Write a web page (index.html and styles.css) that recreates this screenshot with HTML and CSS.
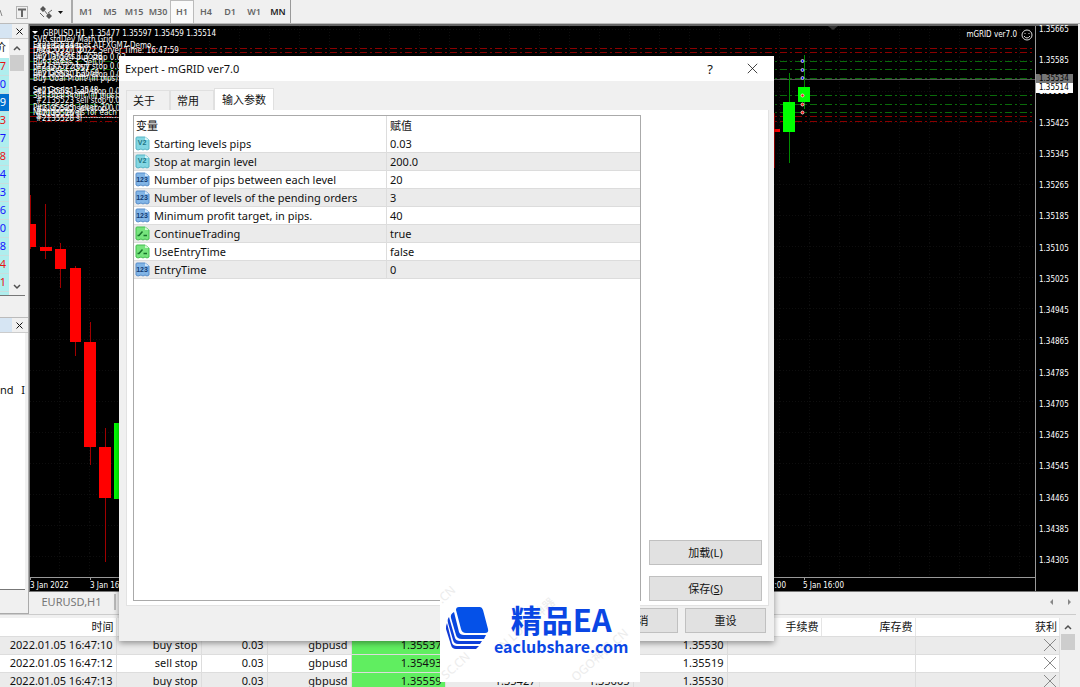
FILE: index.html
```html
<!DOCTYPE html>
<html lang="zh-CN">
<head>
    <meta charset="UTF-8">
    <title>Expert - mGRID ver7.0</title>
    <link rel="stylesheet" href="styles.css">
</head>
<body>
    <!-- shared icons -->
    <svg class="sprite">
        <symbol id="icon-half" viewBox="0 0 15 15">
            <path d="M1 2Q1 1 2 1H10L14 4V13L12 14L10 13L8 14L6 13L3 14L1 13Z" fill="#83d6e2" stroke="#56b4c4"/>
            <path d="M10 1V4H14Z" fill="#d8f5f8"/>
            <text x="7" y="9" class="half-text">V2</text>
        </symbol>
        <symbol id="icon-int" viewBox="0 0 15 15">
            <path d="M1 2Q1 1 2 1H10L14 4V13L12 14L10 13L8 14L6 13L3 14L1 13Z" fill="#82b5e6" stroke="#568dca"/>
            <path d="M10 1V4H14Z" fill="#d3e7fa"/>
            <text x="7" y="10" class="int-text">123</text>
        </symbol>
        <symbol id="icon-bool" viewBox="0 0 15 15">
            <path d="M1 2Q1 1 2 1H10L14 4V13L12 14L10 13L8 14L6 13L3 14L1 13Z" fill="#76e47d" stroke="#45bd50"/>
            <path d="M10 1V4H14Z" fill="#d2f8d4"/>
            <path d="M2.500 9.500H4L7.500 5.500M8.500 9.500H12" fill="none" stroke="#17722a" stroke-width="1.500"/>
        </symbol>
        <symbol id="icon-x" viewBox="0 0 14 14">
            <path d="M1 1L13 13M13 1L1 13" fill="none" stroke="currentColor"/>
        </symbol>
        <symbol id="icon-up" viewBox="0 0 8 8">
            <path d="M1 6L4 3L7 6" fill="none" stroke="#505050" stroke-width="1.500"/>
        </symbol>
        <symbol id="icon-down" viewBox="0 0 8 8">
            <path d="M1 2L4 5L7 2" fill="none" stroke="#505050" stroke-width="1.500"/>
        </symbol>
    </svg>

    <div class="toolbar">
        <svg class="tools" viewBox="0 0 71 24">
            <path d="M0 10L2 16" stroke="#888" fill="none"/>
            <rect x="16.500" y="6.500" width="11" height="12" fill="none" stroke="#777" stroke-dasharray="1 1"/>
            <path d="M18 9.500H26M22 9V17" stroke="#666" stroke-width="2" fill="none"/>
            <path d="M43 6L46 9L43 12L40 9ZM49 13L52 16L49 19L46 16Z" fill="#555"/>
            <path d="M40 13L44 17M44 10L48 15M48 13L52 10" stroke="#666" fill="none"/>
            <path d="M58 11H63L60.500 14Z" fill="#111"/>
        </svg>
        <div class="periods">
            <button>M1</button>
            <button>M5</button>
            <button>M15</button>
            <button>M30</button>
            <button class="active">H1</button>
            <button>H4</button>
            <button>D1</button>
            <button>W1</button>
            <button class="dark">MN</button>
        </div>
    </div>

    <div class="workspace">
        <div class="sidebar">
            <div class="market">
                <div class="side-head"><span></span><button aria-label="关闭"><svg><use href="#icon-x"/></svg></button></div>
                <div class="quotes">
                    <div class="quote-list">
                        <div class="quote-head"><span>价</span></div>
                        <div class="quote down">7</div>
                        <div class="quote">0</div>
                        <div class="quote selected">9</div>
                        <div class="quote down">3</div>
                        <div class="quote">7</div>
                        <div class="quote down">8</div>
                        <div class="quote">4</div>
                        <div class="quote">3</div>
                        <div class="quote">6</div>
                        <div class="quote">0</div>
                        <div class="quote">8</div>
                        <div class="quote down">4</div>
                        <div class="quote down">1</div>
                    </div>
                    <div class="scroll">
                        <svg><use href="#icon-up"/></svg>
                        <div class="thumb"></div>
                        <svg class="last"><use href="#icon-down"/></svg>
                    </div>
                </div>
            </div>
            <div class="navigator">
                <div class="side-head"><span></span><button aria-label="关闭"><svg><use href="#icon-x"/></svg></button></div>
                <div class="nav-list"><span>nd</span><span>I</span></div>
            </div>
        </div>

        <div class="main">
            <div class="chart">
                <svg class="plot">
                    <defs>
                        <pattern id="grid" width="30" height="31" patternUnits="userSpaceOnUse">
                            <path d="M29.500 0V31M0 3.500H30" stroke="#0e0e0e" stroke-dasharray="1 2" fill="none"/>
                        </pattern>
                    </defs>
                    <rect width="100%" height="551" fill="url(#grid)"/>
                    <!-- order levels -->
                    <g class="level stop">
                        <line x1="0" x2="100%" y1="22.500" y2="22.500"/>
                        <line x1="0" x2="100%" y1="26.500" y2="26.500"/>
                        <line x1="0" x2="100%" y1="90.500" y2="90.500"/>
                        <line x1="0" x2="100%" y1="95.500" y2="95.500"/>
                    </g>
                    <g class="level">
                        <line x1="0" x2="100%" y1="35.500" y2="35.500"/>
                        <line x1="0" x2="100%" y1="43.500" y2="43.500"/>
                        <line x1="0" x2="100%" y1="52.500" y2="52.500"/>
                        <line x1="0" x2="100%" y1="69.500" y2="69.500"/>
                        <line x1="0" x2="100%" y1="78.500" y2="78.500"/>
                        <line x1="0" x2="100%" y1="86.500" y2="86.500"/>
                    </g>
                    <line x1="0" x2="100%" y1="53.500" y2="53.500" stroke="#555"/>
                    <!-- candles -->
                    <g fill="#f00" stroke="#a00000">
                        <path d="M.5 169V223M15.500 178V233M30.500 217V262M45.500 240V330M60.500 296V439M75.500 402V536M744.500 87V142"/>
                        <path stroke="none" d="M0 198H6V221H0ZM10 221H22V225H10ZM25 223H36V243H25ZM40 242H51V316H40ZM54 316H66V421H54ZM69 421H81V472H69ZM732 103H750V106H732Z"/>
                    </g>
                    <g fill="#0f0" stroke="#008a00">
                        <path d="M759.500 47V137M774.500 29V83"/>
                        <path stroke="none" d="M84 397H96V473H84ZM753 76H765V106H753ZM768 61H780V76H768Z"/>
                    </g>
                    <g fill="#00f" stroke="#ccc">
                        <circle cx="772.500" cy="35" r="1.500"/>
                        <circle cx="772.500" cy="44" r="1.500"/>
                        <circle cx="772.500" cy="52" r="1.500"/>
                    </g>
                    <g fill="#f00" stroke="#ecc">
                        <circle cx="772.500" cy="69.500" r="1.500"/>
                        <circle cx="772.500" cy="78.500" r="1.500"/>
                        <circle cx="772.500" cy="86.500" r="1.500"/>
                    </g>
                    <path d="M798 0H808L803 4Z" fill="#333"/>
                    <!-- header, EA comment and order labels -->
                    <path d="M2 5H8L5 8Z" fill="#fff"/>
                    <g class="chart-text">
                        <text x="13" y="10">GBPUSD,H1&nbsp; 1.35477 1.35597 1.35459 1.35514</text>
                        <text x="3" y="16">SVR stdDev Math Grid</text>
                        <text x="3" y="22">Expert Trader at ATFXGM7-Demo</text>
                        <text x="6" y="22">#2135521 tp</text>
                        <text x="3" y="27">Date: 05.01.2022 Server Time: 16:47:59</text>
                        <text x="6" y="26">#2135527 tp</text>
                        <text x="3" y="33">Buy Targets 1.3558</text>
                        <text x="6" y="34">#2135524 buy stop 0.03</text>
                        <text x="3" y="39">Buy Levels 3, Sell 0</text>
                        <text x="6" y="43">#2135522 buy stop 0.03</text>
                        <text x="3" y="45">Pending 1.3557</text>
                        <text x="6" y="51">#2135520 buy stop 0.03</text>
                        <text x="3" y="50">Buy Goals: 1.3560</text>
                        <text x="3" y="55">Buy Goal Profit (in pips): 0</text>
                        <text x="3" y="67">Sell Goals: 1.3548</text>
                        <text x="6" y="68">#2135521 sell stop 0.03</text>
                        <text x="3" y="72">Sell Goal Profit (in pips): 0</text>
                        <text x="6" y="77">#2135523 sell stop 0.03</text>
                        <text x="3" y="84">Pips of each level: 20</text>
                        <text x="6" y="85">#2135525 sell stop 0.03</text>
                        <text x="3" y="89">Number levels for each</text>
                        <text x="6" y="90">#2135526 sl</text>
                        <text x="6" y="95">#2135528 sl</text>
                        <text x="6" y="94">----------------------------------</text>
                    </g>
                    <!-- time axis -->
                    <path d="M.5 551V554M60.500 551V554M774.500 551V554" stroke="#999"/>
                    <line x1="0" x2="100%" y1="551.500" y2="551.500" stroke="#999"/>
                    <g class="chart-text">
                        <text x="0" y="562">3 Jan 2022</text>
                        <text x="60" y="562">3 Jan 16:00</text>
                        <text x="715" y="562">5 Jan 12:00</text>
                        <text x="773" y="562">5 Jan 16:00</text>
                    </g>
                </svg>
                <div class="expert-name">mGRID ver7.0
                    <svg viewBox="0 0 12 12"><circle cx="6" cy="6" r="5"/><path d="M3 7Q6 11 9 7M4 4V5M8 4V5"/></svg>
                </div>
                <div class="price-axis">
                    <span>1.35665</span>
                    <span>1.35585</span>
                    <span>1.35505</span>
                    <span>1.35425</span>
                    <span>1.35345</span>
                    <span>1.35265</span>
                    <span>1.35185</span>
                    <span>1.35105</span>
                    <span>1.35025</span>
                    <span>1.34945</span>
                    <span>1.34865</span>
                    <span>1.34785</span>
                    <span>1.34705</span>
                    <span>1.34625</span>
                    <span>1.34545</span>
                    <span>1.34465</span>
                    <span>1.34385</span>
                    <span>1.34305</span>
                    <b class="ask">1.35534</b>
                    <b class="bid">1.35514</b>
                </div>
            </div>
            <div class="chart-tabs">
                <button class="chart-tab">EURUSD,H1</button>
                <svg viewBox="0 0 26 10"><path d="M5 2V8L2 5ZM20 2V8L23 5Z" fill="#888"/></svg>
            </div>
        </div>
    </div>

    <div class="terminal">
        <table class="orders">
            <colgroup>
                <col class="c-time"><col class="c-type"><col class="c-lots"><col class="c-symbol"><col class="c-price"><col class="c-price"><col class="c-price"><col class="c-price"><col class="c-price"><col class="c-price"><col>
            </colgroup>
            <thead>
                <tr><th>时间</th><th></th><th></th><th></th><th></th><th></th><th></th><th></th><th>手续费</th><th>库存费</th><th>获利</th></tr>
            </thead>
            <tbody>
                <tr><td>2022.01.05 16:47:10</td><td>buy stop</td><td>0.03</td><td>gbpusd</td><td class="green">1.35537</td><td></td><td></td><td>1.35530</td><td colspan="2"></td><td><button aria-label="删除"><svg><use href="#icon-x"/></svg></button></td></tr>
                <tr><td>2022.01.05 16:47:12</td><td>sell stop</td><td>0.03</td><td>gbpusd</td><td class="green">1.35493</td><td></td><td></td><td>1.35519</td><td colspan="2"></td><td><button aria-label="删除"><svg><use href="#icon-x"/></svg></button></td></tr>
                <tr><td>2022.01.05 16:47:13</td><td>buy stop</td><td>0.03</td><td>gbpusd</td><td class="green">1.35559</td><td>1.35427</td><td>1.35605</td><td>1.35530</td><td colspan="2"></td><td><button aria-label="删除"><svg><use href="#icon-x"/></svg></button></td></tr>
            </tbody>
        </table>
        <div class="scroll">
            <svg><use href="#icon-up"/></svg>
            <div class="thumb"></div>
        </div>
    </div>

    <!-- expert properties dialog -->
    <div class="dialog" role="dialog" aria-labelledby="dialogTitle">
        <div class="titlebar">
            <span id="dialogTitle">Expert - mGRID ver7.0</span>
            <button>?</button>
            <button aria-label="关闭"><svg><use href="#icon-x"/></svg></button>
        </div>
        <div class="tabs">
            <button>关于</button>
            <button>常用</button>
            <button class="active">输入参数</button>
        </div>
        <div class="tab-page">
            <div class="params">
                <table>
                    <thead>
                        <tr><th class="name">变量</th><th>赋值</th></tr>
                    </thead>
                    <tbody>
                        <tr><td><svg><use href="#icon-half"/></svg>Starting levels pips</td><td>0.03</td></tr>
                        <tr><td><svg><use href="#icon-half"/></svg>Stop at margin level</td><td>200.0</td></tr>
                        <tr><td><svg><use href="#icon-int"/></svg>Number of pips between each level</td><td>20</td></tr>
                        <tr><td><svg><use href="#icon-int"/></svg>Number of levels of the pending orders</td><td>3</td></tr>
                        <tr><td><svg><use href="#icon-int"/></svg>Minimum profit target, in pips.</td><td>40</td></tr>
                        <tr><td><svg><use href="#icon-bool"/></svg>ContinueTrading</td><td>true</td></tr>
                        <tr><td><svg><use href="#icon-bool"/></svg>UseEntryTime</td><td>false</td></tr>
                        <tr><td><svg><use href="#icon-int"/></svg>EntryTime</td><td>0</td></tr>
                    </tbody>
                </table>
            </div>
            <div class="side-buttons">
                <button>加载(L)</button>
                <button>保存(<u>S</u>)</button>
            </div>
        </div>
        <div class="footer">
            <button>取消</button>
            <button>重设</button>
        </div>
    </div>

    <div class="brand">
        <svg class="mark" viewBox="0 0 200 96">
            <g class="faint">
                <text transform="translate(2 18) rotate(-42)">.CN</text>
                <text transform="translate(64 64) rotate(-42)">N LOGO神器</text>
                <text transform="translate(6 94) rotate(-42)">SC.CN</text>
                <text transform="translate(136 96) rotate(-42)">OGO神器.CN</text>
            </g>
        </svg>
        <svg class="logo" viewBox="0 0 44 44">
            <path d="M13 0H34Q36 0 37 3L42 22Q43 26 39 26H20Q16 26 15 22L10 3Q10 0 13 0Z" fill="#0551e8"/>
            <path d="M8 5L13 25Q14 28 18 28H40L38 32H16Q11 32 10 28L5 11Q4 7 8 5Z" fill="#0a48df"/>
            <path d="M3 10L9 31Q10 34 14 34H36L34 37H12Q8 37 7 33L2 16Q1 12 3 10Z" fill="#0f40da"/>
            <path d="M1 16L6 36Q7 39 11 39H33L30 42H10Q6 42 5 38L0 22Q0 18 1 16Z" fill="#123bd7"/>
        </svg>
        <div class="brand-text">
            <strong>精品EA</strong>
            <span>eaclubshare.com</span>
        </div>
    </div>
</body>
</html>
```

FILE: styles.css
```css
* { box-sizing: border-box; }
body {
    margin: 0;
    height: 100vh;
    min-height: 680px;
    display: flex;
    flex-direction: column;
    position: relative;
    overflow: hidden;
    background: #f0f0f0;
    color: #111;
    font-family: "Noto Sans", "Noto Sans CJK SC", sans-serif;
    font-size: 11px;
    line-height: 16px;
}
button { font: inherit; color: inherit; background: none; border: 0; padding: 0; }
svg { display: block; flex: none; }
.sprite { position: absolute; width: 0; height: 0; }
.half-text, .int-text { font-family: "Liberation Sans", sans-serif; font-size: 7px; font-weight: bold; text-anchor: middle; }
.half-text { fill: #1b7484; }
.int-text { fill: #123c75; }

/* toolbar */
.toolbar { display: flex; height: 24px; flex: none; border-bottom: 1px solid #bbb; }
.tools { width: 71px; height: 24px; }
.periods { display: flex; padding-left: 1px; border-left: 2px solid #aaa; border-right: 1px solid #999; }
.periods button { width: 24px; font-size: 9px; font-weight: 600; color: #666; }
.periods .active { background: #fafafa; border: 1px solid #bbb; border-width: 1px 1px 0; }
.periods .dark { color: #222; }

.workspace { flex: 1; display: flex; min-height: 0; }

/* left panels */
.sidebar { width: 29px; flex: none; display: flex; flex-direction: column; border-right: 1px solid #aaa; }
.side-head { display: flex; height: 15px; align-items: stretch; border-bottom: 1px solid #ccc; }
.side-head span { width: 12px; background: #d6e5f3; }
.side-head button { width: 14px; display: flex; align-items: center; justify-content: center; }
.side-head svg { width: 7px; height: 7px; }
.side-head use { stroke-width: 2px; }
.quotes { display: flex; height: 257px; width: 25px; border-bottom: 1px solid #777; }
.quote-list { width: 9px; background: #afeeee; }
.quote-head { height: 19px; background: #fff; display: flex; justify-content: flex-end; overflow: hidden; padding-right: 3px; }
.quote { height: 18px; color: #1414ff; border-bottom: 1px solid #c8dede; padding-right: 3px; display: flex; justify-content: flex-end; }
.quote.down { color: #e81414; }
.quote.selected { background: #0070d0; color: #fff; }
.scroll { width: 16px; flex: none; display: flex; flex-direction: column; align-items: center; background: #f0f0f0; padding-top: 5px; }
.scroll svg { width: 8px; height: 8px; }
.scroll .thumb { width: 14px; height: 16px; margin-top: 3px; background: #cdcdcd; }
.scroll .last { margin-top: auto; margin-bottom: 4px; }
.navigator { flex: 1; display: flex; flex-direction: column; margin-top: 21px; padding-bottom: 23px; border-top: 1px solid #bbb; border-bottom: 1px solid #aaa; }
.nav-list { flex: 1; width: 25px; padding-top: 49px; display: flex; justify-content: space-between; background: #fff; border-bottom: 1px solid #777; }

/* chart */
.main { flex: 1; min-width: 0; display: flex; flex-direction: column; margin-right: 2px; }
.chart { flex: 1; min-height: 0; display: flex; position: relative; background: #000; border-top: 2px solid #666; border-left: 1px solid #777; border-bottom: 1px solid #777; }
.plot { flex: 1; min-width: 0; height: 100%; }
.level { stroke: #0a6a0a; stroke-dasharray: 7 3 2 3; }
.level.stop { stroke: #8a0000; }
.chart-text, .price-axis, .expert-name { font-family: "DejaVu Sans Condensed", "Noto Sans", sans-serif; font-size: 8px; }
.chart-text { fill: #fff; }
.expert-name { position: absolute; right: 45px; top: 1px; display: flex; align-items: center; gap: 4px; color: #fff; }
.expert-name svg { width: 12px; height: 12px; fill: none; stroke: #ddd; }
.price-axis {
    width: 43px;
    flex: none;
    position: relative;
    display: flex;
    flex-direction: column;
    justify-content: space-between;
    padding-bottom: 26px;
    line-height: 8px;
    color: #fff;
    border-left: 1px solid #999;
}
.price-axis span { padding-left: 3px; }
.price-axis b { position: absolute; left: 0; top: 48px; width: 37px; padding-left: 3px; font-weight: normal; line-height: 10px; background: #777; color: #000; }
.price-axis .bid { top: 57px; background: #fff; }
.chart-tabs { height: 22px; flex: none; display: flex; align-items: center; justify-content: space-between; padding: 0 4px 3px 0; }
.chart-tab { width: 87px; color: #777; border-right: 2px solid #bbb; }
.chart-tabs svg { width: 26px; height: 10px; }

/* terminal */
.terminal { height: 73px; flex: none; display: flex; margin-right: 4px; border-top: 1px solid #ccc; padding-top: 3px; overflow: hidden; }
.orders { flex: 1; align-self: flex-start; table-layout: fixed; border-collapse: collapse; background: #fff; }
.orders th { height: 18px; padding: 0 2px; text-align: right; font-weight: normal; border-right: 1px solid #e5e5e5; border-bottom: 1px solid #ddd; }
.orders td { height: 18px; padding: 0 3px; text-align: right; border-right: 1px solid #ddd; border-bottom: 1px solid #ddd; }
.orders tbody tr:nth-child(odd) { background: #ebebeb; }
.orders .green { background: #60ee60; }
.orders td:last-child { padding-right: 2px; }
.orders button { display: block; margin-left: auto; color: #888; }
.orders svg { width: 14px; height: 14px; }
.c-time { width: 116px; }
.c-type { width: 85px; }
.c-lots { width: 66px; }
.c-symbol { width: 84px; }
.c-price { width: 94px; }

/* dialog */
.dialog { position: absolute; left: 119px; top: 56px; width: 655px; background: #f0f0f0; box-shadow: 0 2px 6px rgba(0, 0, 0, 0.4); }
.titlebar { display: flex; align-items: center; height: 25px; padding: 0 14px 0 6px; background: #fff; }
.titlebar span { flex: 1; }
.titlebar button { width: 16px; margin-left: 26px; font-size: 13px; display: flex; justify-content: center; }
.titlebar svg { width: 11px; height: 11px; }
.tabs { display: flex; align-items: flex-end; height: 29px; padding-left: 7px; }
.tabs button { height: 20px; width: 44px; padding-right: 8px; border: 1px solid #e0e0e0; border-bottom: 0; }
.tabs .active { width: 60px; height: 22px; padding: 0; background: #fff; }
.tab-page { display: flex; height: 496px; margin: 0 5px 0 7px; padding: 5px 6px 4px; background: #fff; border: 1px solid #e2e2e2; border-top: 0; }
.params { flex: 1; border: 1px solid #aaa; }
.params table { width: 100%; table-layout: fixed; border-spacing: 0; }
.params th { height: 19px; padding: 0 0 0 2px; font-weight: normal; text-align: left; }
.params .name { width: 252px; }
.params th + th, .params td + td { padding-left: 3px; border-left: 1px solid #ddd; }
.params td { height: 18px; padding: 0 0 0 1px; line-height: 17px; border-bottom: 1px solid #dcdcdc; white-space: nowrap; }
.params tbody tr:nth-child(even) { background: #ebebeb; }
.params svg { width: 15px; height: 15px; float: left; margin: 1px 4px 0 0; }
.side-buttons { width: 121px; padding-left: 8px; display: flex; flex-direction: column; justify-content: flex-end; gap: 11px; }
.side-buttons button, .footer button { height: 25px; background: #e1e1e1; border: 1px solid #c0c0c0; }
.footer { display: flex; justify-content: flex-end; gap: 7px; padding: 2px 8px 8px; }
.footer button { width: 81px; }

/* brand card */
.brand { position: absolute; left: 440px; top: 586px; width: 200px; height: 96px; display: flex; align-items: center; padding: 0 6px 10px; gap: 4px; background: #fff; color: #0a46e4; overflow: hidden; }
.mark { position: absolute; left: 0; top: 0; width: 200px; height: 96px; }
.faint { fill: #ececec; font-size: 12px; }
.logo { position: relative; width: 44px; height: 44px; }
.brand-text { position: relative; display: flex; flex-direction: column; align-items: center; }
.brand strong { font-family: "Noto Sans CJK SC", sans-serif; font-size: 31px; line-height: 34px; }
.brand span { font-family: "Noto Sans CJK SC", sans-serif; font-weight: bold; font-size: 16px; line-height: 20px; }
```
